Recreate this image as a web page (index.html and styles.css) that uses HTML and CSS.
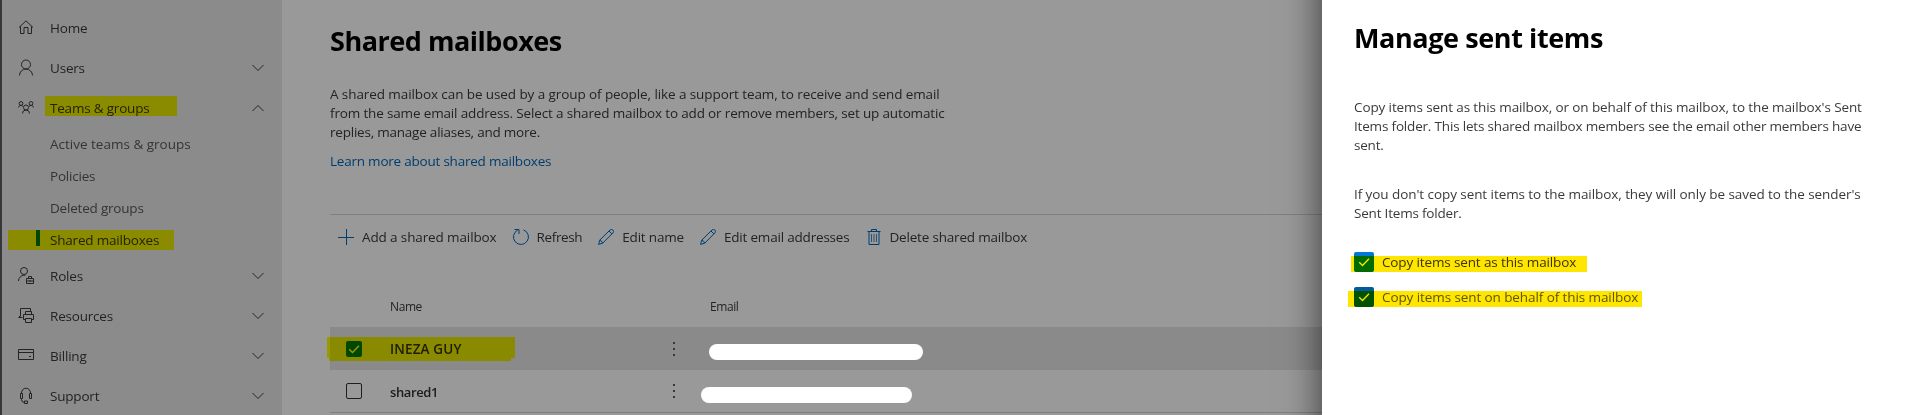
FILE: index.html
```html
<!DOCTYPE html>
<html lang="en">
<head>
<meta charset="utf-8">
<title>Shared mailboxes</title>
<link rel="stylesheet" href="styles.css">
</head>
<body>
<svg class="defs" width="0" height="0" aria-hidden="true">
  <symbol id="down" viewBox="0 0 12 8"><path d="M.5 1 6 6.500 11.500 1"/></symbol>
  <symbol id="up" viewBox="0 0 12 8"><path d="M.5 7 6 1.500 11.500 7"/></symbol>
  <symbol id="pencil" viewBox="0 0 16 16"><path d="M.6 15.400 1.700 11.200 12 1a2 2 0 0 1 2.900 2.900L4.700 14.200ZM11 2l2.900 2.900M1.700 11.200q2.400.6 3 3"/></symbol>
  <symbol id="tick" viewBox="0 0 16 16"><path d="M3.200 8.300 6.500 11.500 13 4.800"/></symbol>
  <symbol id="dots" viewBox="0 0 4 16"><path d="M1 1h2v2H1zM1 7h2v2H1zM1 13h2v2H1z"/></symbol>
</svg>
<div class="app">
  <nav class="sidebar">
    <a class="item"><svg class="icon" viewBox="0 0 16 16"><path d="M1 7.500 8 .8 15 7.500M2.500 6.500v7h3.500V7.500h4v6h3.500V6.500"/></svg><span>Home</span></a>
    <a class="item"><svg class="icon" viewBox="0 0 16 16"><circle cx="8" cy="4.500" r="4.500"/><path d="M1.500 15.500a6.500 6.500 0 0 1 13 0"/></svg><span>Users</span><svg class="chev"><use href="#down"/></svg></a>
    <a class="item"><svg class="icon" viewBox="0 0 16 16"><circle cx="3" cy="3.500" r="1.900"/><circle cx="13" cy="3.500" r="1.900"/><circle cx="8" cy="7.500" r="2.500"/><path d="M.5 7.500A2.500 2.500 0 0 1 5 6.500M15.500 7.500A2.500 2.500 0 0 0 11 6.500M4.500 13.500a3.500 3.500 0 0 1 7 0"/></svg><span>Teams &amp; groups</span><svg class="chev"><use href="#up"/></svg></a>
    <a class="sub wide">Active teams &amp; groups</a>
    <a class="sub">Policies</a>
    <a class="sub">Deleted groups</a>
    <a class="sub current">Shared mailboxes</a>
    <a class="item"><svg class="icon" viewBox="0 0 16 16"><circle cx="6" cy="3" r="3.500"/><path d="M.5 13A6 6 0 0 1 7.500 7.200M8.500 10.500h7v5h-7zM10.500 10.500v-2h3v2M8.500 13h7M12 12v2"/></svg><span>Roles</span><svg class="chev"><use href="#down"/></svg></a>
    <a class="item"><svg class="icon" viewBox="0 0 16 16"><path d="M2.500 8.500V.5h10v3M4.500 9.500h-4l2-2M7.500 6.500v-3h6v3M7.500 11.500h-2v-5h10v5h-2M7.500 10.500h6v4h-6z"/></svg><span>Resources</span><svg class="chev"><use href="#down"/></svg></a>
    <a class="item"><svg class="icon" viewBox="0 0 16 16"><path d="M.5 1.500h15v10H.5zM.5 4.500h15M11 8.500h2"/></svg><span>Billing</span><svg class="chev"><use href="#down"/></svg></a>
    <a class="item"><svg class="icon" viewBox="0 0 16 16"><path d="M3.500 5.500V5a4.500 4.800 0 0 1 9 0v.5M2.500 5.500h2v5h-2zM11.500 5.500h2v5h-2zM3.500 10.500v1q0 3 3 3M6.500 13h3v2.500h-3z"/></svg><span>Support</span><svg class="chev"><use href="#down"/></svg></a>
  </nav>
  <main class="main">
    <h1>Shared mailboxes</h1>
    <p class="intro"><span class="l1">A shared mailbox can be used by a group of people, like a support team, to receive and send email</span><span class="l2">from the same email address. Select a shared mailbox to add or remove members, set up automatic</span><span class="l3">replies, manage aliases, and more.</span></p>
    <a class="learn">Learn more about shared mailboxes</a>
    <div class="toolbar">
      <span class="cmd add"><svg class="icon" viewBox="0 0 16 16"><path d="M0 8.500h16M8.500 0v16"/></svg>Add a shared mailbox</span>
      <span class="cmd refresh"><svg class="icon" viewBox="0 0 16 16"><path d="M10.500.9a7.500 7.500 0 1 1-5.800.3M1.500.5H6V5"/></svg>Refresh</span>
      <span class="cmd"><svg class="icon"><use href="#pencil"/></svg>Edit name</span>
      <span class="cmd"><svg class="icon"><use href="#pencil"/></svg>Edit email addresses</span>
      <span class="cmd"><svg class="icon" viewBox="0 0 16 16"><path d="M1.500 2.500h13M5.500 2V.5h5V2M3 2.500v13h10v-13"/><path class="slats" d="M5.500 5v8M8 5v8M10.500 5v8"/></svg>Delete shared mailbox</span>
    </div>
    <div class="table">
      <div class="row head"><span></span><span>Name</span><span></span><span>Email</span></div>
      <div class="row selected"><i class="box on"><svg><use href="#tick"/></svg></i><b class="caps">INEZA GUY</b><svg class="dots"><use href="#dots"/></svg><span></span></div>
      <div class="row"><i class="box"></i><b>shared1</b><svg class="dots"><use href="#dots"/></svg><span></span></div>
    </div>
  </main>
</div>
<div class="dim"></div>
<aside class="panel">
  <h2>Manage sent items</h2>
  <p><span class="p1">Copy items sent as this mailbox, or on behalf of this mailbox, to the mailbox's Sent</span><span class="p2">Items folder. This lets shared mailbox members see the email other members have</span><span>sent.</span></p>
  <p><span class="p3">If you don't copy sent items to the mailbox, they will only be saved to the sender's</span><span>Sent Items folder.</span></p>
  <label class="option"><i class="check"><svg><use href="#tick"/></svg></i>Copy items sent as this mailbox</label>
  <label class="option muted"><i class="check"><svg><use href="#tick"/></svg></i>Copy items sent on behalf of this mailbox</label>
</aside>
<div class="mark m-teams"></div>
<div class="mark m-shared"></div>
<div class="mark m-row"></div>
<div class="mark m-opt1"></div>
<div class="mark m-opt2"></div>
<div class="cover c1"></div>
<div class="cover c2"></div>
</body>
</html>
```
FILE: styles.css
```css
* { box-sizing: border-box; }
body {
  margin: 0;
  width: 1908px;
  height: 415px;
  overflow: hidden;
  position: relative;
  background: #fff;
  color: #3c3a39;
  font: 13.5px/19px "Open Sans", "Noto Sans", sans-serif;
  letter-spacing: -.2px;
  white-space: nowrap;
}
.defs { position: absolute; }
svg { fill: none; stroke: currentColor; stroke-width: 1; flex: none; }
h1, h2, p { margin: 0; }
h1, h2 { font-size: 27px; line-height: 38px; font-weight: 700; color: #000; }
p span { display: block; }
.app { display: flex; height: 415px; overflow: hidden; }

.sidebar {
  width: 282px;
  flex: none;
  padding-top: 8px;
  background: #e8e8e8;
  border-left: 2px solid #5c5c5c;
}
.item { display: flex; align-items: center; height: 40px; padding: 0 18px 0 16px; }
.icon { width: 16px; height: 16px; overflow: visible; }
.item span { margin-left: 16px; flex: 1; }
.chev { width: 12px; height: 8px; }
.sub { display: flex; align-items: center; height: 32px; padding-left: 48px; color: #5a5856; }
.wide { letter-spacing: 0; }
.current { color: #3c3a39; padding-left: 34px; }
.current::before { content: ""; width: 4px; height: 16px; margin: -4px 10px 0 0; background: #0078d4; }

.main { flex: 1; padding: 22px 0 0 48px; }
.main h1 { letter-spacing: -.47px; }
.intro { margin-top: 25px; }
.l1 { letter-spacing: -.09px; }
.l2 { letter-spacing: -.155px; }
.l3 { letter-spacing: -.22px; }
.learn { display: block; margin-top: 10px; color: #0067b8; letter-spacing: -.22px; }
.toolbar {
  display: flex;
  align-items: center;
  gap: 16px;
  height: 47px;
  margin-top: 43px;
  padding: 0 0 2px 8px;
  border-top: 1px solid #d6d6d6;
}
.cmd { display: flex; align-items: center; gap: 8px; letter-spacing: -.19px; }
.cmd svg { color: #0067b8; }
.add { letter-spacing: -.12px; }
.refresh { letter-spacing: -.36px; }
.slats { stroke-width: 1; opacity: .75; }
.row {
  display: grid;
  grid-template-columns: 44px 283px 37px 1fr;
  align-items: center;
  height: 43px;
  padding-left: 16px;
  border-bottom: 1px solid #d6d6d6;
}
.row b { padding-top: 2px; font-size: 13px; font-weight: 600; letter-spacing: -.4px; color: #323130; }
.row .caps { font-size: 13.5px; letter-spacing: .15px; }
.head { height: 66px; padding-top: 24px; font-size: 12px; border: 0; letter-spacing: -.4px; }
.selected { background: #e7e7e7; border: 0; }
.dots { width: 4px; height: 16px; margin-left: -1px; fill: #605e5c; stroke: none; }
.box { display: block; width: 16px; height: 16px; border: 1px solid #323130; border-radius: 2px; }
.on { border: 0; background: #0078d4; color: #fff; }
.on svg { stroke-width: 1.5; }
.box svg { display: block; width: 16px; height: 16px; }

.dim { position: absolute; inset: 0; background: rgba(0, 0, 0, .4); }

.panel {
  position: absolute;
  left: 1322px;
  top: -60px;
  width: 586px;
  height: 535px;
  padding: 79px 0 0 32px;
  background: #fff;
  box-shadow: 0 0 36px rgba(0, 0, 0, .65);
}
.panel h2 { letter-spacing: -.4px; }
.panel p { margin-top: 41px; }
.panel p + p { margin-top: 30px; }
.p1 { letter-spacing: -.11px; }
.p2 { letter-spacing: -.18px; }
.p3 { letter-spacing: -.07px; }
.option { display: flex; align-items: center; gap: 8px; height: 20px; margin-top: 29px; letter-spacing: -.13px; }
.option + .option { margin-top: 15px; }
.muted { color: #605e5c; letter-spacing: -.09px; }
.check { width: 20px; height: 20px; padding: 2px; border-radius: 2px; background: #0078d4; color: #fff; }
.check svg { display: block; width: 16px; height: 16px; stroke-width: 1.3; }
.muted .check { background: #005a9e; }

/* Highlighter strokes and redaction covers lie over the page. */
.mark { position: absolute; mix-blend-mode: multiply; background: #ff0; }
.m-teams { left: 45px; top: 96px; width: 132px; height: 20px; }
.m-shared { left: 8px; top: 230px; width: 166px; height: 20px; }
.m-row { left: 327px; top: 337px; width: 188px; height: 24px; clip-path: polygon(0 0, 100% 0, 100% 21px, 184px 21px, 184px 100%, 2px 100%, 2px 21px, 0 21px); }
.m-opt1 { left: 1351px; top: 256px; width: 236px; height: 16px; background: #ffe600; }
.m-opt2 { left: 1348px; top: 291px; width: 294px; height: 16px; background: #ffe600; }
.cover { position: absolute; height: 16px; border-radius: 8px; background: #fff; }
.c1 { left: 709px; top: 344px; width: 214px; }
.c2 { left: 701px; top: 387px; width: 211px; }
```
